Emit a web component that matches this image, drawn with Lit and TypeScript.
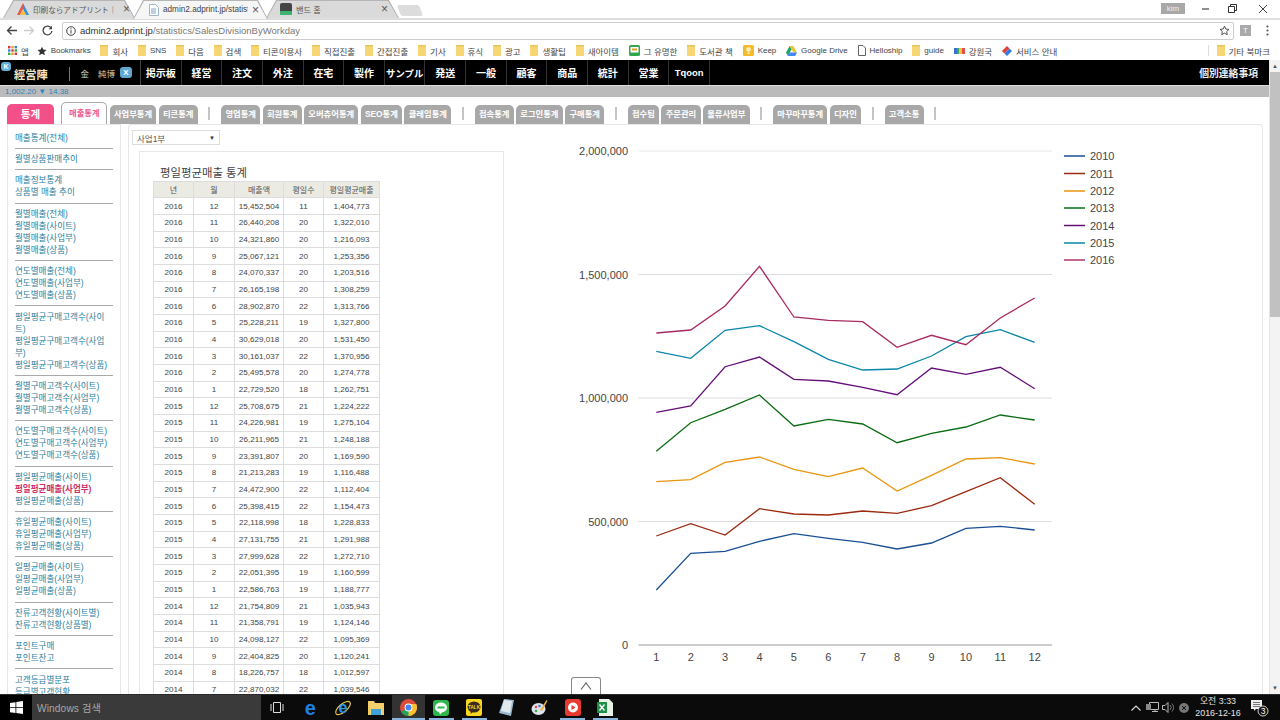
import { LitElement, html, css, svg } from "lit";
import { customElement } from "lit/decorators.js";

const ROWS = `2016 12 15,452,504 11 1,404,773
2016 11 26,440,208 20 1,322,010
2016 10 24,321,860 20 1,216,093
2016 9 25,067,121 20 1,253,356
2016 8 24,070,337 20 1,203,516
2016 7 26,165,198 20 1,308,259
2016 6 28,902,870 22 1,313,766
2016 5 25,228,211 19 1,327,800
2016 4 30,629,018 20 1,531,450
2016 3 30,161,037 22 1,370,956
2016 2 25,495,578 20 1,274,778
2016 1 22,729,520 18 1,262,751
2015 12 25,708,675 21 1,224,222
2015 11 24,226,981 19 1,275,104
2015 10 26,211,965 21 1,248,188
2015 9 23,391,807 20 1,169,590
2015 8 21,213,283 19 1,116,488
2015 7 24,472,900 22 1,112,404
2015 6 25,398,415 22 1,154,473
2015 5 22,118,998 18 1,228,833
2015 4 27,131,755 21 1,291,988
2015 3 27,999,628 22 1,272,710
2015 2 22,051,395 19 1,160,599
2015 1 22,586,763 19 1,188,777
2014 12 21,754,809 21 1,035,943
2014 11 21,358,791 19 1,124,146
2014 10 24,098,127 22 1,095,369
2014 9 22,404,825 20 1,120,241
2014 8 18,226,757 18 1,012,597
2014 7 22,870,032 22 1,039,546`.split("\n").map((r) => r.split(" "));

const SERIES: [string, string, number[]][] = [
  ["2010", "#1b4f94", [590, 553.3, 551.3, 541.3, 533.7, 538.3, 542.3, 549, 543, 528.3, 526.3, 530]],
  ["2011", "#9c2a10", [536, 523.7, 535, 508.7, 514, 515, 511, 513.3, 505.7, 491.7, 477.7, 504.3]],
  ["2012", "#e8950f", [481.7, 479.7, 462.3, 457, 469.3, 476.7, 468, 491, 475.3, 459, 457.7, 464]],
  ["2013", "#0a6b12", [451.3, 422.7, 409.3, 395, 426, 419.3, 424, 442.7, 433.3, 427, 415, 420]],
  ["2014", "#660f7a", [412.3, 406, 366.7, 357, 379.3, 381, 387.3, 394.7, 368, 374.3, 367.3, 388.7]],
  ["2015", "#0a86a8", [351.3, 358.3, 330.3, 325.7, 341.7, 359.3, 370, 369, 356, 336.7, 329.7, 342.3]],
  ["2016", "#a82a62", [333, 330, 306, 266.3, 317, 320.3, 321.7, 347.3, 335.3, 344.7, 318, 298]],
];
const LEGEND_Y = [156, 173.5, 191, 208, 225.5, 243, 260];
const GRID: [string, number][] = [["2,000,000", 151], ["1,500,000", 274.5], ["1,000,000", 398], ["500,000", 521.5]];
const X = (i: number) => 656.3 + 34.4 * i;

const NAV = ["掲示板", "経営", "注文", "外注", "在宅", "製作", "サンプル", "発送", "一般", "顧客", "商品", "統計", "営業", "Tqoon"];
const TABS = ["사업부통계", "티콘통계", "|", "영업통계", "회원통계", "오버츄어통계", "SEO통계", "클레임통계", "|", "접속통계", "로그인통계", "구매통계", "|", "접수팀", "주문관리", "물류사업부", "|", "마꾸마꾸통계", "디자인", "|", "고객소통", "|"];
const SIDE: string[][] = [
  ["매출통계(전체)"],
  ["월별상품판매추이"],
  ["매출정보통계", "상품별 매출 추이"],
  ["월별매출(전체)", "월별매출(사이트)", "월별매출(사업부)", "월별매출(상품)"],
  ["연도별매출(전체)", "연도별매출(사업부)", "연도별매출(상품)"],
  ["평일평균구매고객수(사이트)", "평일평균구매고객수(사업부)", "평일평균구매고객수(상품)"],
  ["월별구매고객수(사이트)", "월별구매고객수(사업부)", "월별구매고객수(상품)"],
  ["연도별구매고객수(사이트)", "연도별구매고객수(사업부)", "연도별구매고객수(상품)"],
  ["평일평균매출(사이트)", "평일평균매출(사업부)", "평일평균매출(상품)"],
  ["휴일평균매출(사이트)", "휴일평균매출(사업부)", "휴일평균매출(상품)"],
  ["일평균매출(사이트)", "일평균매출(사업부)", "일평균매출(상품)"],
  ["잔류고객현황(사이트별)", "잔류고객현황(상품별)"],
  ["포인트구매", "포인트잔고"],
  ["고객등급별분포", "등급별고객현황"],
];

const folder = html`<svg class="ic" width="8" height="11" viewBox="0 0 8 11"><path d="M0 0h8v11H0z" fill="#f7d774"/><path d="M0 0h8v1.500H0z" fill="#e8c35c"/></svg>`;

@customElement("app-root")
export class AppRoot extends LitElement {
  static styles = css`
    :host { display: flex; flex-direction: column; width: 1280px; height: 720px; overflow: hidden; background: #fff;
      font-family: "Liberation Sans", "Noto Sans CJK KR", sans-serif; color: #333; position: relative; }
    * { box-sizing: border-box; }
    .jp { font-family: "Liberation Sans", "Noto Sans CJK JP", sans-serif; }

    .strip { height: 18px; flex: none; display: flex; align-items: flex-end; padding-left: 3px; background: #fff; position: relative; }
    .ctab { height: 18px; position: relative; display: flex; align-items: center; font-size: 8.2px; color: #555;
      clip-path: polygon(10px 0, calc(100% - 10px) 0, 100% 100%, 0 100%); background: #b5b5b5; margin-right: -2px; padding: 0 11px 0 14px; gap: 4px; }
    .ctab::before { content: ""; position: absolute; inset: 1px 1px 0 1px; background: #dadada;
      clip-path: polygon(10px 0, calc(100% - 10px) 0, 100% 100%, 0 100%); }
    .ctab.on { z-index: 2; height: 19px; margin-bottom: -1px; color: #444; }
    .ctab.on::before { background: #f6f6f6; bottom: 0; }
    .ctab > * { position: relative; }
    .t1 { width: 132px; padding-right: 5px; } .t2 { width: 135px; padding-right: 9px; padding-left: 16px; } .t3 { width: 133px; }
    .ctab .ttl { flex: 1; white-space: nowrap; overflow: hidden; }
    .t1 .ttl { font-size: 7.6px; }
    .ctab .x { font-size: 12px; color: #555; line-height: 1; }
    .newtab { width: 22px; height: 11px; margin: 0 0 2px 2px; background: #dcdcdc; transform: skewX(20deg); border-radius: 2px; }
    .winbtns { margin-left: auto; display: flex; align-items: center; align-self: flex-start; height: 15px; margin-top: 1px; padding-right: 12px; }
    .kim { width: 24px; height: 11px; background: #a8a8a8; color: #eee; font-size: 8px; text-align: center; line-height: 11px; margin-right: 17px; }
    .winbtns svg { display: block; }
    .g1 { margin-right: 19px; } .g2 { margin-right: 21px; }

    .toolbar { height: 23px; flex: none; border-top: 2px solid #dedede; display: flex; align-items: center; background: #fff; padding-left: 6px; }
    .toolbar svg { display: block; flex: none; }
    .navbtns { display: flex; gap: 7px; width: 56px; align-items: center; }
    .addr { width: 1172px; height: 18px; border: 1px solid #ccc; border-radius: 2px; display: flex; align-items: center; padding: 0 3px; font-size: 9.5px; color: #777; gap: 4px; }
    .addr b { font-weight: 400; color: #333; }
    .addr .star { margin-left: auto; }
    .ext { width: 11px; height: 11px; background: #a9a9a9; color: #fff; font-size: 7px; text-align: center; line-height: 11px; margin-left: 6px; }
    .dots { margin-left: 15px; }

    .bm { height: 19px; flex: none; display: flex; align-items: center; padding: 0 10px 0 8px; gap: 9.8px; font-size: 8.5px; color: #444; background: #fff; white-space: nowrap; }
    .bm .it { display: flex; align-items: center; gap: 4px; }
    .bm .apps { margin-right: -2px; }
    .bm .lat { font-size: 8px; }
    .ic { display: block; flex: none; }
    .bm .more { margin-left: auto; border-left: 1px solid #ddd; padding-left: 8px; height: 11px; }

    .main { flex: 1; min-height: 0; display: flex; overflow: hidden; }
    .page { width: 1269px; flex: none; display: flex; flex-direction: column; min-height: 0; }
    .sb { flex: 1; background: #f3f3f3; border-left: 1px solid #e4e4e4; display: flex; flex-direction: column; align-items: center; }
    .sb i { height: 12px; font-size: 6px; font-style: normal; line-height: 12px; color: #555; flex: none; }
    .sb .thumb { width: 100%; height: 245px; background: #c1c1c1; flex: none; }
    .sb .sp { flex: 1; }

    .nav { height: 25px; flex: none; background: #000; display: flex; color: #fff; font-weight: 700; font-size: 10px; position: relative; }
    .kbadge { position: absolute; left: 1px; top: 2px; width: 10px; height: 9px; border-radius: 3px; background: #5fb0dc; color: #fff; font-size: 7px; line-height: 9px; text-align: center; }
    .logo { width: 69.5px; padding-left: 14px; display: flex; align-items: center; color: #efe8c8; font-size: 11.2px; padding-top: 3px; position: relative; }
    .logo::after { content: ""; position: absolute; right: 0; top: 7px; bottom: 4px; border-right: 1px solid #777; }
    .user { width: 71.5px; display: flex; align-items: center; padding-left: 11px; font-weight: 400; font-size: 8.5px; color: #d8d0b0; border-right: 1px solid #444; }
    .user .n { margin-left: 9px; }
    .user .xb { margin-left: 5px; width: 12px; height: 11px; border-radius: 3px; background: #5fa8d0; color: #fff; font-size: 8px; font-weight: 700; text-align: center; line-height: 11px; }
    .ni { width: 40.65px; flex: none; display: flex; align-items: center; justify-content: center; border-right: 1px solid #333; white-space: nowrap; }
    .ni.sm { font-size: 9.4px; }
    .nav .right { margin-left: auto; padding-right: 11px; display: flex; align-items: center; font-size: 9.8px; color: #eee; }

    .quote { height: 12px; flex: none; background: #bbb; border-top: 1px solid #ddd; font-size: 8px; color: #2f86bc; padding-left: 5px; line-height: 11px; }

    .tabs { height: 27px; flex: none; display: flex; align-items: flex-end; padding-left: 7px; gap: 2.3px; white-space: nowrap; }
    .tb { height: 19px; padding: 0 4.3px; border-radius: 5px 5px 0 0; background: #a8a8a8; color: #fff; font-weight: 700; font-size: 8.3px; line-height: 19px; flex: none; }
    .tb.main-t { width: 47px; height: 20px; background: #f3508a; font-size: 10.5px; text-align: center; line-height: 20px; margin-right: 5px; padding: 0; }
    .tb.cur { width: 46px; height: 22px; background: #fff; border: 1px solid #aaa; border-bottom: 0; color: #ee5a8e; line-height: 21px; padding: 0; text-align: center; }
    .tsep { width: 2px; height: 13px; background: #c4c4c4; flex: none; margin: 0 8.4px 4px 8.4px; }

    .body { flex: 1; min-height: 0; display: flex; padding: 0 7px; gap: 7px; overflow: hidden; }
    .side { width: 114px; flex: none; border: 1px solid #e6e6e6; border-bottom: 0; padding: 2.5px 7px 0 7px; font-size: 8.55px; line-height: 12px; color: #2c7f9f; }
    .grp { padding: 4.2px 0 4.2px 0; border-bottom: 1px solid #a9a9a9; }
    .grp .act { color: #d12f66; font-weight: 700; }

    .content { width: 1135px; flex: none; border: 1px solid #e6e6e6; border-bottom: 0; border-radius: 4px 4px 0 0; display: flex; overflow: hidden; position: relative; }
    .left { width: 375px; flex: none; padding: 5px 0 0 3px; display: flex; flex-direction: column; }
    .sel { width: 88px; height: 15px; flex: none; border: 1px solid #ddd; font-size: 8.5px; color: #555; display: flex; align-items: center; justify-content: space-between; padding: 0 4px; }
    .sel span { font-size: 6px; color: #333; }
    .panel { margin: 6px 0 0 7px; width: 365px; flex: none; border: 1px solid #e8e8e8; border-bottom: 0; padding: 13.5px 0 0 13px; }
    .ptitle { font-size: 11.4px; line-height: 15px; color: #444; padding-left: 7px; }
    table { border-collapse: collapse; table-layout: fixed; width: 226px; font-size: 8.1px; color: #444; }
    th, td { border: 1px solid #ddd; height: 16.68px; padding: 0; text-align: center; font-weight: 400; overflow: hidden; white-space: nowrap; }
    th { background: #ebebe3; color: #555; font-size: 8px; }
    .c1 { width: 40px; } .c2 { width: 41px; } .c3 { width: 49px; } .c4 { width: 40px; } .c5 { width: 56px; }
    .chart { display: block; flex: none; width: 745px; height: 566px; margin-top: 5px; }
    .chart text { font-family: "Liberation Sans", sans-serif; font-size: 11px; fill: #444; }

    .up { position: absolute; left: 571px; top: 677px; width: 30px; height: 17px; border: 1px solid #888; border-bottom: 0; border-radius: 3px 3px 0 0; background: #fff; display: flex; justify-content: center; align-items: center; z-index: 3; }

    .task { height: 26px; flex: none; background: #0b0b0b; display: flex; align-items: center; border-top: 1px solid #2a2a2a; }
    .start { width: 32px; height: 100%; display: flex; align-items: center; justify-content: center; background: #000; flex: none; }
    .search { width: 229px; height: 100%; background: #3a3a3a; color: #a8a8a8; font-size: 10.2px; display: flex; align-items: center; padding-left: 5px; flex: none; letter-spacing: .1px; }
    .slot { width: 32.8px; height: 100%; flex: none; display: flex; align-items: center; justify-content: center; position: relative; }
    .slot.open::after { content: ""; position: absolute; left: 4px; right: 4px; bottom: 0; height: 2px; background: #86b4dc; }
    .slot.act { background: #333; }
    .slot.act::after { left: 0; right: 0; }
    .ltr { font: 700 20px/1 "Liberation Sans", sans-serif; color: #1f7fe0; }
    .tray { margin-left: auto; display: flex; align-items: center; height: 100%; color: #ddd; flex: none; }
    .tray .s { width: 16px; display: flex; justify-content: center; }
    .clock { width: 52px; text-align: center; font-size: 8.9px; line-height: 12px; color: #e4e4e4; padding-bottom: 2px; }
    .notif { width: 36px; display: flex; justify-content: flex-start; padding-left: 7px; position: relative; }
  `;

  private chart() {
    return svg`
      ${GRID.map(([l, y]) => svg`
        <line x1="638.5" x2="1052" y1=${y} y2=${y} stroke=${y === 151 ? "#e8e8e8" : "#dcdcdc"} stroke-width="1"></line>
        <text x="628" y=${y + 4} text-anchor="end">${l}</text>`)}
      <line x1="638.5" x2="1052" y1="645" y2="645" stroke="#999" stroke-width="1"></line>
      <text x="628" y="649" text-anchor="end">0</text>
      ${Array.from({ length: 12 }, (_, i) => svg`<text x=${X(i)} y="661" text-anchor="middle">${i + 1}</text>`)}
      ${SERIES.map(([, c, ys]) => svg`<polyline fill="none" stroke=${c} stroke-width="1.3" points=${ys.map((y, i) => `${X(i).toFixed(1)},${y}`).join(" ")}></polyline>`)}
      ${SERIES.map(([l, c], i) => svg`
        <line x1="1064" x2="1085" y1=${LEGEND_Y[i]} y2=${LEGEND_Y[i]} stroke=${c} stroke-width="1.4"></line>
        <text x="1090" y=${LEGEND_Y[i] + 4}>${l}</text>`)}
    `;
  }

  render() {
    return html`
      <div class="strip">
        <div class="ctab t1"><svg width="12" height="12" viewBox="0 0 12 12"><path d="M6 0L0 12h3L6 6z" fill="#e8574f"/><path d="M6 0l6 12H9L6 6z" fill="#3b8fd8"/><path d="M3 12h6L6 6z" fill="#f2c23c"/></svg><span class="ttl jp">印刷ならアドプリント｜</span><span class="x">×</span></div>
        <div class="ctab t2 on"><svg width="10" height="12" viewBox="0 0 10 12"><path d="M.5.5h6l3 3v8H.5z" fill="#fff" stroke="#9fb6cc"/><path d="M2 5h5M2 7h5M2 9h5" stroke="#7ea4c8"/></svg><span class="ttl">admin2.adprint.jp/statist</span><span class="x">×</span></div>
        <div class="ctab t3"><svg width="12" height="12" viewBox="0 0 12 12"><rect width="12" height="12" rx="2" fill="#444"/><rect y="8" width="12" height="4" rx="1" fill="#3cb371"/></svg><span class="ttl">밴드 홈</span><span class="x">×</span></div>
        <div class="newtab"></div>
        <div class="winbtns">
          <div class="kim">kim</div>
          <svg class="g1" width="7" height="2" viewBox="0 0 7 2"><path d="M0 1h7" stroke="#444" stroke-width="1.200"/></svg>
          <svg class="g2" width="9" height="9" viewBox="0 0 9 9"><path d="M.5 2.500h6v6h-6zM2.500 2.500v-2h6v6h-2" fill="none" stroke="#333"/></svg>
          <svg width="10" height="10" viewBox="0 0 10 10"><path d="M1 1l8 8M9 1l-8 8" stroke="#444"/></svg>
        </div>
      </div>

      <div class="toolbar">
        <div class="navbtns">
          <svg width="11" height="11" viewBox="0 0 11 11"><path d="M11 5.500H1.500M5.500 1.500l-4 4 4 4" fill="none" stroke="#444" stroke-width="1.300"/></svg>
          <svg width="11" height="11" viewBox="0 0 11 11"><path d="M0 5.500h9.500M5.500 1.500l4 4-4 4" fill="none" stroke="#ccc" stroke-width="1.300"/></svg>
          <svg width="11" height="11" viewBox="0 0 11 11"><path d="M9.300 3.200A4.400 4.400 0 1 0 9.900 6" fill="none" stroke="#444" stroke-width="1.300"/><path d="M10 .8v3.400H6.600z" fill="#444"/></svg>
        </div>
        <div class="addr">
          <svg width="10" height="10" viewBox="0 0 10 10"><circle cx="5" cy="5" r="4.300" fill="none" stroke="#444"/><path d="M5 4.200v3.300M5 2.200v1.200" stroke="#444"/></svg>
          <span><b>admin2.adprint.jp</b>/statistics/SalesDivisionByWorkday</span>
          <svg class="star" width="11" height="11" viewBox="0 0 24 24"><path d="M12 2.500l2.900 6.300 6.900.8-5.100 4.700 1.400 6.800-6.100-3.400-6.100 3.400 1.400-6.800L2.200 9.600l6.900-.8z" fill="none" stroke="#444" stroke-width="2"/></svg>
        </div>
        <div class="ext">T</div>
        <svg class="dots" width="3" height="11" viewBox="0 0 3 11"><circle cx="1.500" cy="1.500" r="1.100" fill="#555"/><circle cx="1.500" cy="5.500" r="1.100" fill="#555"/><circle cx="1.500" cy="9.500" r="1.100" fill="#555"/></svg>
      </div>

      <div class="bm">
        <div class="it apps"><svg class="ic" width="9" height="9" viewBox="0 0 9 9"><path d="M0 0h2.400v2.400H0z" fill="#d33"/><path d="M3.300 0h2.400v2.400H3.300z" fill="#e8a020"/><path d="M6.600 0H9v2.400H6.600z" fill="#3a7de0"/><path d="M0 3.300h2.400v2.400H0z" fill="#3a7de0"/><path d="M3.300 3.300h2.400v2.400H3.300z" fill="#d33"/><path d="M6.600 3.300H9v2.400H6.600z" fill="#3a3"/><path d="M0 6.600h2.400V9H0z" fill="#3a3"/><path d="M3.300 6.600h2.400V9H3.300z" fill="#e8a020"/><path d="M6.600 6.600H9V9H6.600z" fill="#d33"/></svg>앱</div>
        <div class="it"><svg class="ic" width="10" height="10" viewBox="0 0 24 24"><path d="M12 1.500l3.200 7 7.600.9-5.600 5.200 1.500 7.500L12 18.300l-6.700 3.800 1.500-7.500L1.200 9.400l7.600-.9z" fill="#333"/></svg><span class="lat">Bookmarks</span></div>
        ${["회사", "SNS", "다음", "검색", "티콘이용사", "직접진출", "간접진출", "기사", "휴식", "광고", "생활팁", "새아이템"].map((t) => html`<div class="it">${folder}<span class=${t === "SNS" ? "lat" : ""}>${t}</span></div>`)}
        <div class="it"><svg class="ic" width="11" height="11" viewBox="0 0 11 11"><rect width="11" height="11" rx="1.500" fill="#2fa84f"/><rect x="1.500" y="2" width="8" height="5.500" fill="#fff"/><rect x="3" y="3.500" width="5" height="2" fill="#e89a2c"/></svg>그 유명한</div>
        <div class="it">${folder}도서관 책</div>
        <div class="it"><svg class="ic" width="11" height="11" viewBox="0 0 11 11"><rect width="11" height="11" rx="1.500" fill="#f6b92b"/><circle cx="5.500" cy="4.500" r="2.300" fill="#fff3c4"/><path d="M4.300 7.500h2.400v1.500H4.300z" fill="#fff3c4"/></svg><span class="lat">Keep</span></div>
        <div class="it"><svg class="ic" width="11" height="10" viewBox="0 0 11 10"><path d="M3.700 0h3.600l3.700 6.500H7.400z" fill="#f6c12f"/><path d="M3.700 0L0 6.500 1.800 10l3.700-6.500z" fill="#1fa463"/><path d="M3.300 6.500H11L9.200 10H1.800z" fill="#4285f4"/></svg><span class="lat">Google Drive</span></div>
        <div class="it"><svg class="ic" width="8" height="11" viewBox="0 0 8 11"><path d="M.5.5h4.500l2.500 2.500v7.500h-7z" fill="#fff" stroke="#666"/></svg><span class="lat">Helloship</span></div>
        <div class="it">${folder}<span class="lat">guide</span></div>
        <div class="it"><svg class="ic" width="11" height="6" viewBox="0 0 11 6"><path d="M0 0h3v6H0z" fill="#3b6fd8"/><path d="M3 0h2.500v6H3z" fill="#3cab55"/><path d="M5.500 0H8v6H5.500z" fill="#f2c23c"/><path d="M8 0h3v6H8z" fill="#e2504a"/></svg>강원국</div>
        <div class="it"><svg class="ic" width="10" height="10" viewBox="0 0 10 10"><path d="M5 0l2.500 2.500L2.500 7.500 0 5z" fill="#e2403c"/><path d="M7.500 2.500L10 5 5 10 2.500 7.500z" fill="#2f7fdc"/></svg>서비스 안내</div>
        <div class="it more">${folder}기타 북마크</div>
      </div>

      <div class="main">
        <div class="page">
          <div class="nav">
            <div class="kbadge">K</div>
            <div class="logo jp">經営陣</div>
            <div class="user jp"><span>金</span><span class="n">純博</span><span class="xb">X</span></div>
            ${NAV.map((n) => html`<div class="ni jp ${n === "サンプル" || n === "Tqoon" ? "sm" : ""}">${n}</div>`)}
            <div class="right jp">個別連絡事項</div>
          </div>
          <div class="quote">1,002.20 ▼ 14.38</div>
          <div class="tabs">
            <div class="tb main-t">통계</div>
            <div class="tb cur">매출통계</div>
            ${TABS.map((t) => (t === "|" ? html`<div class="tsep"></div>` : html`<div class="tb">${t}</div>`))}
          </div>
          <div class="body">
            <div class="side">
              ${SIDE.map((g) => html`<div class="grp">${g.map((t) => html`<div class=${t === "평일평균매출(사업부)" ? "act" : ""}>${t}</div>`)}</div>`)}
            </div>
            <div class="content">
              <div class="left">
                <div class="sel">사업1부<span>▼</span></div>
                <div class="panel">
                  <div class="ptitle">평일평균매출 통계</div>
                  <table>
                    <colgroup><col class="c1" /><col class="c2" /><col class="c3" /><col class="c4" /><col class="c5" /></colgroup>
                    <tr><th>년</th><th>월</th><th>매출액</th><th>평일수</th><th>평일평균매출</th></tr>
                    ${ROWS.map((r) => html`<tr>${r.map((c) => html`<td>${c}</td>`)}</tr>`)}
                  </table>
                </div>
              </div>
              <svg class="chart" viewBox="504 130 745 566">${this.chart()}</svg>
            </div>
          </div>
        </div>
        <div class="sb"><i>▲</i><div class="thumb"></div><div class="sp"></div><i>▼</i></div>
      </div>

      <div class="up"><svg width="12" height="8" viewBox="0 0 12 8"><path d="M1 7.500L6 1l5 6.500" fill="none" stroke="#666" stroke-width="1.200"/></svg></div>

      <div class="task">
        <div class="start"><svg width="13" height="13" viewBox="0 0 13 13"><path d="M0 2l5.500-.8v5H0zM6.300 1.100L13 0v6.200H6.300zM0 7h5.500v5L0 11.200zM6.300 7H13v6l-6.700-1z" fill="#fff"/></svg></div>
        <div class="search">Windows 검색</div>
        <div class="slot"><svg width="14" height="13" viewBox="0 0 14 13"><path d="M3.500 1.500h7v10h-7z" fill="none" stroke="#ddd"/><path d="M1 3v7M13 3v7" stroke="#ddd"/></svg></div>
        <div class="slot"><span class="ltr">e</span></div>
        <div class="slot"><svg width="18" height="18" viewBox="0 0 18 18"><ellipse cx="9" cy="9" rx="9" ry="4" transform="rotate(-40 9 9)" fill="none" stroke="#e9c545" stroke-width="1.200"/><text x="9" y="13.500" text-anchor="middle" font-family="Liberation Sans" font-weight="700" font-size="16" fill="#2b9ae0">e</text></svg></div>
        <div class="slot"><svg width="16" height="14" viewBox="0 0 16 14"><path d="M0 0h6l1 2h9v12H0z" fill="#f3cf6a"/><path d="M3 8h10v6H3z" fill="#3fa0d8"/></svg></div>
        <div class="slot act open"><svg width="17" height="17" viewBox="0 0 20 20"><circle cx="10" cy="10" r="10" fill="#dd4b39"/><path d="M10 10L1.300 15A10 10 0 0 0 10 20c1.500 0 3-.3 4.300-1z" fill="#1da462"/><path d="M10 6h9.200A10 10 0 0 1 10 20z" fill="#fbc02d"/><circle cx="10" cy="10" r="4.600" fill="#fff"/><circle cx="10" cy="10" r="3.500" fill="#4285f4"/></svg></div>
        <div class="slot open"><svg width="16" height="16" viewBox="0 0 16 16"><rect width="16" height="16" rx="3" fill="#2fb84a"/><ellipse cx="8" cy="7.500" rx="6" ry="5" fill="#fff"/><path d="M6 11.500l1 3 3-3z" fill="#fff"/><path d="M4.500 6.500h7v2h-7z" fill="#2fb84a"/></svg></div>
        <div class="slot open"><svg width="16" height="17" viewBox="0 0 16 17"><rect width="16" height="17" rx="2" fill="#f8d81c"/><ellipse cx="8" cy="8" rx="6.500" ry="5.500" fill="#3c2a1e"/><path d="M5 12l-.5 3 3-2.500z" fill="#3c2a1e"/><text x="8" y="9.800" text-anchor="middle" font-family="Liberation Sans" font-weight="700" font-size="4.600" fill="#f8d81c">TALK</text></svg></div>
        <div class="slot"><svg width="15" height="17" viewBox="0 0 15 17"><path d="M5 0l10 1-3 16-12-3z" fill="#9ab9cf"/><path d="M5 1l8 1-2 12-9-2z" fill="#dfe9ee"/></svg></div>
        <div class="slot"><svg width="17" height="17" viewBox="0 0 17 17"><ellipse cx="7.500" cy="10" rx="7" ry="6" fill="#dfe4ea"/><circle cx="5" cy="8" r="1.300" fill="#e2504a"/><circle cx="8.500" cy="7" r="1.300" fill="#3a7de0"/><circle cx="5" cy="12" r="1.300" fill="#3cab55"/><path d="M9 11L15.500 1l1 .8L11 12z" fill="#e9b33c"/></svg></div>
        <div class="slot open"><svg width="16" height="17" viewBox="0 0 16 17"><rect width="16" height="17" rx="3" fill="#e8392f"/><circle cx="8" cy="8.500" r="5" fill="#fff"/><path d="M6.500 6l4 2.500-4 2.500z" fill="#e8392f"/></svg></div>
        <div class="slot open"><svg width="16" height="17" viewBox="0 0 16 17"><path d="M2 0h10l4 4v13H2z" fill="#e8f2e6"/><path d="M0 3h10v11H0z" fill="#1e8f47"/><path d="M2.500 5.500l5 6M7.500 5.500l-5 6" stroke="#fff" stroke-width="1.400"/></svg></div>
        <div class="tray">
          <div class="s"><svg width="10" height="6" viewBox="0 0 10 6"><path d="M.5 5.500L5 1l4.500 4.500" fill="none" stroke="#ddd" stroke-width="1.100"/></svg></div>
          <div class="s"><svg width="13" height="12" viewBox="0 0 13 12"><path d="M3.500 .5h9v7h-9zM6 9.500h6M9 7.500v2" fill="none" stroke="#bbb"/><path d="M0 2h5v6H0z" fill="#888"/></svg></div>
          <div class="s"><svg width="13" height="11" viewBox="0 0 13 11"><path d="M.5 3.500h2.500l3-3v10l-3-3H.5z" fill="none" stroke="#bbb"/><path d="M8 3a3.500 3.500 0 0 1 0 5M10 1.500a6 6 0 0 1 0 8" fill="none" stroke="#777"/></svg></div>
          <div class="s"><svg width="10" height="10" viewBox="0 0 10 10"><circle cx="5" cy="5" r="5" fill="#777"/><path d="M3 3l4 4M7 3l-4 4" stroke="#111"/></svg></div>
          <div class="clock"><div>오전 3:33</div><div>2016-12-16</div></div>
          <div class="notif"><svg width="20" height="18" viewBox="0 0 20 18"><path d="M0 1h11v9H5l-2 2v-2H0z" fill="#eee"/><path d="M2 3.500h7M2 5.500h7M2 7.500h7" stroke="#555" stroke-width=".8"/><circle cx="12" cy="12" r="5" fill="#111" stroke="#ccc"/><text x="12" y="15" text-anchor="middle" font-family="Liberation Sans" font-size="8.500" fill="#fff">3</text></svg></div>
        </div>
      </div>
    `;
  }
}
